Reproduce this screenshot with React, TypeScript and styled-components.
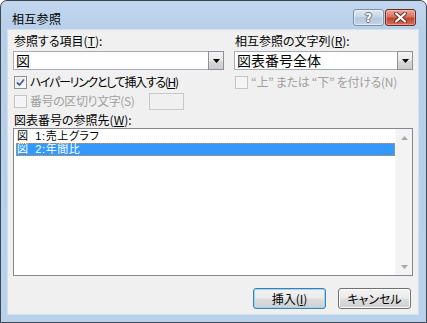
import React from "react";
import styled, { createGlobalStyle, css } from "styled-components";

const GlobalStyle = createGlobalStyle`
  html, body { margin: 0; padding: 0; background: #ffffff; }
  body { font-family: "Noto Sans CJK JP", "Noto Sans", sans-serif; font-size: 12px; color: #000; }
  * { box-sizing: border-box; }
`;

const Window = styled.div`
  width: 427px;
  height: 323px;
  border: 1px solid #3e4650;
  border-radius: 7px 7px 0 0;
  background: linear-gradient(to bottom, #c2d7ee 0px, #b7cfe8 30px, #b9d1ea 100%);
  display: flex;
  flex-direction: column;
  padding: 0 8px 8px 7px;
  overflow: hidden;
`;

const TitleBar = styled.div`
  height: 29px;
  display: flex;
  align-items: flex-start;
  justify-content: space-between;
  padding: 0 2px 0 4px;
`;

const Title = styled.div`
  margin-top: 10px;
  font-size: 12px;
  line-height: 16px;
  color: #000;
  letter-spacing: 0.3px;
`;

const CaptionButtons = styled.div`
  display: flex;
  gap: 1px;
  margin-top: 8px;
`;

const CaptionButton = styled.div<{ $variant: "help" | "close" }>`
  width: 31px;
  height: 17px;
  border-radius: 3px;
  display: flex;
  align-items: center;
  justify-content: center;
  ${(p) =>
    p.$variant === "help"
      ? css`
          border: 1px solid #7890ab;
          background: linear-gradient(to bottom, #dfe8f3 0%, #c8d6e6 45%, #b6c8dc 55%, #c6d5e6 100%);
          box-shadow: inset 0 0 0 1px rgba(255, 255, 255, 0.5);
        `
      : css`
          border: 1px solid #6b2a22;
          background: linear-gradient(to bottom, #e9a99c 0%, #d7735f 45%, #c4442c 55%, #d2705c 100%);
          box-shadow: inset 0 0 0 1px rgba(255, 200, 190, 0.5);
        `}
`;

const HelpGlyph = styled.span`
  font-family: "DejaVu Sans", sans-serif;
  font-weight: bold;
  font-size: 12px;
  line-height: 12px;
  color: #ffffff;
  text-shadow: 1px 0 0 #62758c, -1px 0 0 #62758c, 0 1px 0 #62758c, 0 -1px 0 #62758c;
`;

const Client = styled.div`
  flex: 1;
  background: #f0f0f0;
  display: flex;
  flex-direction: column;
  padding: 3px 5px 0 5px;
  box-shadow: 0 0 0 1px #d3e0ee;
`;

const TopGrid = styled.div`
  display: grid;
  grid-template-columns: 211px 179px;
  column-gap: 10px;
`;

const Column = styled.div`
  display: flex;
  flex-direction: column;
`;

const FieldLabel = styled.div<{ $top?: number }>`
  height: 16px;
  line-height: 16px;
  font-size: 12px;
  padding-left: 1px;
  margin-top: ${(p) => p.$top ?? 0}px;
  white-space: nowrap;
  font-feature-settings: "palt";
`;

const Combo = styled.div`
  margin-top: 2px;
  height: 19px;
  border: 1px solid #a5acb5;
  background: #ffffff;
  display: flex;
  align-items: stretch;
`;

const ComboText = styled.div`
  flex: 1;
  font-size: 14px;
  line-height: 17px;
  padding-left: 2px;
  white-space: nowrap;
`;

const DropButton = styled.div`
  width: 16px;
  border: 1px solid #8e9196;
  margin: -1px -1px -1px 0;
  height: 19px;
  background: linear-gradient(to bottom, #f4f4f4 0%, #e8e8e8 50%, #d8d8d8 51%, #cdcdcd 100%);
  display: flex;
  align-items: center;
  justify-content: center;
`;

const CheckRow = styled.div<{ $top: number; $disabled?: boolean }>`
  margin-top: ${(p) => p.$top}px;
  height: 16px;
  display: flex;
  align-items: center;
  gap: 3px;
  padding-left: 1px;
  font-size: 12px;
  line-height: 16px;
  white-space: nowrap;
  font-feature-settings: "palt";
  color: ${(p) => (p.$disabled ? "#a0a0a0" : "#000")};
`;

const CheckText = styled.span<{ $spacing?: number }>`
  letter-spacing: ${(p) => p.$spacing ?? 0}px;
`;

const CheckBox = styled.div<{ $checked?: boolean; $disabled?: boolean }>`
  width: 13px;
  height: 13px;
  flex: none;
  border: 1px solid ${(p) => (p.$disabled ? "#c4c4c4" : "#8e8f8f")};
  background: ${(p) =>
    p.$disabled
      ? "#f4f4f4"
      : "linear-gradient(135deg, #dcdfe3 0%, #f5f5f5 70%, #ffffff 100%)"};
  box-shadow: inset 0 0 0 1px ${(p) => (p.$disabled ? "#f7f7f7" : "#f4f4f4")};
  display: flex;
  align-items: center;
  justify-content: center;
`;

const SepInput = styled.div`
  margin-left: 12px;
  width: 35px;
  height: 17px;
  border: 1px solid #c8c8c8;
  background: #f0f0f0;
`;

const ListBox = styled.div`
  width: 400px;
  height: 148px;
  border: 1px solid #828790;
  background: #ffffff;
  display: flex;
`;

const ListItems = styled.div`
  flex: 1;
  padding: 1px 0 0 2px;
  display: flex;
  flex-direction: column;
`;

const ListItem = styled.div<{ $selected?: boolean }>`
  height: 13px;
  line-height: 13px;
  font-family: "Liberation Sans", "Noto Sans CJK JP", sans-serif;
  font-size: 11px;
  letter-spacing: 0.6px;
  word-spacing: 3px;
  padding-left: 1px;
  white-space: nowrap;
  font-feature-settings: "palt";
  ${(p) =>
    p.$selected
      ? css`
          background: #3399ff;
          color: #ffffff;
          outline: 1px dotted #f08a24;
          outline-offset: -1px;
        `
      : css`
          color: #000;
        `}
`;

const ScrollBar = styled.div`
  width: 17px;
  background: #f3f3f3;
  border-left: 1px solid #f8f8f8;
  display: flex;
  flex-direction: column;
  justify-content: space-between;
`;

const ScrollArrow = styled.div`
  height: 17px;
  display: flex;
  align-items: center;
  justify-content: center;
`;

const ButtonRow = styled.div`
  margin-top: 12px;
  display: flex;
  justify-content: flex-end;
  gap: 12px;
  padding-right: 2px;
`;

const DialogButton = styled.div<{ $default?: boolean }>`
  width: 73px;
  height: 21px;
  border-radius: 3px;
  display: flex;
  align-items: center;
  justify-content: center;
  font-size: 12px;
  font-feature-settings: "palt";
  background: linear-gradient(to bottom, #f2f2f2 0%, #ebebeb 48%, #dddddd 52%, #cfcfcf 100%);
  border: 1px solid ${(p) => (p.$default ? "#3c7fb1" : "#707070")};
  box-shadow: inset 0 0 0 1px ${(p) => (p.$default ? "#9fd5f5" : "#fcfcfc")};
`;

const Arrow = () => (
  <svg width="7" height="4" viewBox="0 0 7 4">
    <path d="M0 0 H7 L3.5 4 Z" fill="#000" />
  </svg>
);

const UpArrow = () => (
  <svg width="7" height="4" viewBox="0 0 7 4">
    <path d="M0 4 H7 L3.5 0 Z" fill="#a8a8a8" />
  </svg>
);

const DownArrow = () => (
  <svg width="7" height="4" viewBox="0 0 7 4">
    <path d="M0 0 H7 L3.5 4 Z" fill="#a8a8a8" />
  </svg>
);

const Check = () => (
  <svg width="9" height="9" viewBox="0 0 9 9">
    <path d="M1 4.5 L3.5 7 L8 1.5" fill="none" stroke="#4a5f97" strokeWidth="1.8" />
  </svg>
);

const CloseX = () => (
  <svg width="13" height="11" viewBox="0 0 13 11">
    <path d="M2 1.5 L11 9.5 M11 1.5 L2 9.5" stroke="#6a2a20" strokeWidth="4" strokeLinecap="round" />
    <path d="M2 1.5 L11 9.5 M11 1.5 L2 9.5" stroke="#ffffff" strokeWidth="2.2" strokeLinecap="round" />
  </svg>
);

export default function App() {
  return (
    <>
      <GlobalStyle />
      <Window>
        <TitleBar>
          <Title>相互参照</Title>
          <CaptionButtons>
            <CaptionButton $variant="help">
              <HelpGlyph>?</HelpGlyph>
            </CaptionButton>
            <CaptionButton $variant="close">
              <CloseX />
            </CaptionButton>
          </CaptionButtons>
        </TitleBar>
        <Client>
          <TopGrid>
            <Column>
              <FieldLabel>
                参照する項目(<u>T</u>):
              </FieldLabel>
              <Combo>
                <ComboText>図</ComboText>
                <DropButton>
                  <Arrow />
                </DropButton>
              </Combo>
              <CheckRow $top={4}>
                <CheckBox $checked>
                  <Check />
                </CheckBox>
                <CheckText $spacing={-1.3}>
                  ハイパーリンクとして挿入する(<u>H</u>)
                </CheckText>
              </CheckRow>
              <CheckRow $top={3} $disabled>
                <CheckBox $disabled />
                <CheckText $spacing={-0.4}>番号の区切り文字(S)</CheckText>
                <SepInput />
              </CheckRow>
            </Column>
            <Column>
              <FieldLabel>
                相互参照の文字列(<u>R</u>):
              </FieldLabel>
              <Combo>
                <ComboText>図表番号全体</ComboText>
                <DropButton>
                  <Arrow />
                </DropButton>
              </Combo>
              <CheckRow $top={4} $disabled>
                <CheckBox $disabled />
                <CheckText $spacing={-0.3}>“上” または “下” を付ける(N)</CheckText>
              </CheckRow>
            </Column>
          </TopGrid>
          <FieldLabel $top={3}>
            図表番号の参照先(<u>W</u>):
          </FieldLabel>
          <ListBox>
            <ListItems>
              <ListItem>図 1:売上グラフ</ListItem>
              <ListItem $selected>図 2:年間比</ListItem>
            </ListItems>
            <ScrollBar>
              <ScrollArrow>
                <UpArrow />
              </ScrollArrow>
              <ScrollArrow>
                <DownArrow />
              </ScrollArrow>
            </ScrollBar>
          </ListBox>
          <ButtonRow>
            <DialogButton $default>
              挿入(<u>I</u>)
            </DialogButton>
            <DialogButton>キャンセル</DialogButton>
          </ButtonRow>
        </Client>
      </Window>
    </>
  );
}
